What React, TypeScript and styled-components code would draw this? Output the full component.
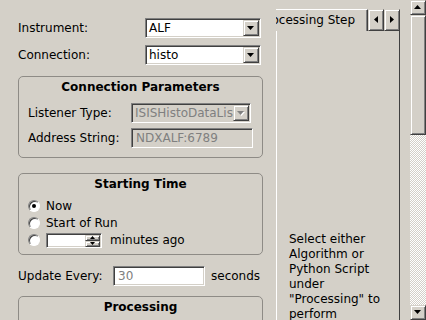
import React from 'react';
import styled, { createGlobalStyle, css } from 'styled-components';

const GlobalStyle = createGlobalStyle`
  html, body { margin: 0; padding: 0; background: #d4d0c8; }
  body {
    font-family: "DejaVu Sans", "Liberation Sans", sans-serif;
    font-size: 12px;
    color: #000;
  }
  #root { width: 426px; height: 320px; }
`;

const sunken = css`
  border: 1px solid;
  border-color: #808080 #ffffff #ffffff #808080;
  box-shadow: inset 1px 1px 0 #404040, inset -1px -1px 0 #d4d0c8;
`;

const raised = css`
  border: 1px solid;
  border-color: #d4d0c8 #404040 #404040 #d4d0c8;
  box-shadow: inset 1px 1px 0 #ffffff, inset -1px -1px 0 #808080;
`;

const Window = styled.div`
  display: flex;
  width: 426px;
  height: 320px;
  overflow: hidden;
  background: #d4d0c8;
`;

const LeftPane = styled.div`
  width: 270px;
  flex-shrink: 0;
  box-sizing: border-box;
  padding: 18px 7px 0 18px;
  display: flex;
  flex-direction: column;
  overflow: hidden;
`;

const FormRow = styled.div<{ $top?: number }>`
  display: flex;
  align-items: center;
  height: 20px;
  flex-shrink: 0;
  margin-top: ${p => p.$top ?? 0}px;
`;

const Label = styled.span<{ $width?: number; $left?: number }>`
  width: ${p => (p.$width ? `${p.$width}px` : 'auto')};
  margin-left: ${p => p.$left ?? 0}px;
  flex-shrink: 0;
  white-space: nowrap;
`;

const Combo = styled.div<{ $width: number; $disabled?: boolean }>`
  ${sunken};
  box-sizing: border-box;
  width: ${p => p.$width}px;
  height: 20px;
  padding: 1px;
  display: flex;
  align-items: center;
  background: ${p => (p.$disabled ? '#d4d0c8' : '#ffffff')};
  color: ${p => (p.$disabled ? '#808080' : '#000')};
`;

const ComboText = styled.span`
  flex: 1;
  padding-left: 2px;
  overflow: hidden;
  white-space: nowrap;
`;

const DropButton = styled.div`
  ${raised};
  box-sizing: border-box;
  width: 16px;
  height: 16px;
  flex-shrink: 0;
  display: flex;
  align-items: center;
  justify-content: center;
  background: #d4d0c8;
`;

const LineEdit = styled.div<{ $width: number; $bg?: string }>`
  ${sunken};
  box-sizing: border-box;
  width: ${p => p.$width}px;
  height: 20px;
  padding-left: 4px;
  display: flex;
  align-items: center;
  background: ${p => p.$bg ?? '#ffffff'};
  color: #808080;
  white-space: nowrap;
  overflow: hidden;
`;

const GroupBox = styled.div<{ $top: number; $bottom?: number }>`
  flex-shrink: 0;
  margin-top: ${p => p.$top}px;
  border: 1px solid #8e8b86;
  border-radius: 5px;
  padding: 3px 9px ${p => p.$bottom ?? 9}px;
  display: flex;
  flex-direction: column;
`;

const GroupTitle = styled.div`
  font-weight: bold;
  text-align: center;
  line-height: 15px;
`;

const BoxRows = styled.div<{ $top: number; $gap: number }>`
  display: flex;
  flex-direction: column;
  margin-top: ${p => p.$top}px;
  gap: ${p => p.$gap}px;
`;

const RadioRow = styled.div`
  display: flex;
  align-items: center;
  height: 16px;
  gap: 6px;
  white-space: nowrap;
`;

const Radio = styled.span<{ $checked?: boolean }>`
  position: relative;
  box-sizing: border-box;
  width: 12px;
  height: 12px;
  flex-shrink: 0;
  border-radius: 50%;
  border: 1px solid;
  border-color: #808080 #ffffff #ffffff #808080;
  box-shadow: inset 1px 1px 0 #404040;
  background: #fff;

  &::after {
    content: '';
    display: ${p => (p.$checked ? 'block' : 'none')};
    position: absolute;
    left: 3px;
    top: 3px;
    width: 4px;
    height: 4px;
    border-radius: 50%;
    background: #000;
  }
`;

const SpinBox = styled.div`
  ${sunken};
  box-sizing: border-box;
  width: 56px;
  height: 15px;
  padding: 1px;
  display: flex;
  justify-content: flex-end;
  background: #fff;
  margin-right: 2px;
`;

const SpinButtons = styled.div`
  width: 15px;
  display: flex;
  flex-direction: column;
`;

const SpinButton = styled.div`
  ${raised};
  box-sizing: border-box;
  flex: 1;
  display: flex;
  align-items: center;
  justify-content: center;
  background: #d4d0c8;
`;

const RightPane = styled.div`
  width: 124px;
  flex-shrink: 0;
  margin: 9px 0 0 6px;
  display: flex;
  flex-direction: column;
`;

const TabBar = styled.div`
  display: flex;
  height: 22px;
  flex-shrink: 0;
`;

const TabClip = styled.div`
  flex: 1;
  overflow: hidden;
  display: flex;
  justify-content: flex-end;
`;

const Tab = styled.div`
  flex-shrink: 0;
  border-top: 1px solid #fff;
  border-right: 1px solid #404040;
  box-shadow: inset -1px 0 0 #808080;
  padding: 0 12px 0 12px;
  line-height: 21px;
  white-space: nowrap;
`;

const TabScroll = styled.div`
  ${raised};
  box-sizing: border-box;
  width: 16px;
  height: 22px;
  display: flex;
  align-items: center;
  justify-content: center;
  background: #d4d0c8;
`;

const TabPage = styled.div`
  flex: 1;
  border-left: 1px solid #fff;
  border-right: 1px solid #404040;
  padding: 201px 0 0 12px;
  line-height: 15px;
  white-space: nowrap;
`;

const Spacer = styled.div`
  width: 10px;
  flex-shrink: 0;
`;

const ScrollBar = styled.div`
  width: 16px;
  height: 320px;
  flex-shrink: 0;
  display: flex;
  flex-direction: column;
`;

const ScrollArrow = styled.div`
  ${raised};
  box-sizing: border-box;
  height: 15px;
  flex-shrink: 0;
  display: flex;
  align-items: center;
  justify-content: center;
  background: #d4d0c8;
`;

const Thumb = styled.div`
  ${raised};
  box-sizing: border-box;
  height: 120px;
  flex-shrink: 0;
  background: #d4d0c8;
`;

const Trough = styled.div`
  flex: 1;
  background: repeating-conic-gradient(#ffffff 0 25%, #d4d0c8 0 50%) 0 0 / 2px 2px;
`;

type Dir = 'up' | 'down' | 'left' | 'right';

function Arrow({ dir, size = 7, color = '#000', shadow }: { dir: Dir; size?: number; color?: string; shadow?: boolean }) {
  const h = Math.ceil(size / 2);
  const vertical = dir === 'up' || dir === 'down';
  const w = vertical ? size : h;
  const ht = vertical ? h : size;
  const pts: Record<Dir, string> = {
    down: `0,0 ${size},0 ${size / 2},${h}`,
    up: `0,${h} ${size},${h} ${size / 2},0`,
    left: `${h},0 ${h},${size} 0,${size / 2}`,
    right: `0,0 0,${size} ${h},${size / 2}`,
  };
  return (
    <svg width={w + 1} height={ht + 1} viewBox={`0 0 ${w + 1} ${ht + 1}`}>
      {shadow && <polygon points={pts[dir]} fill="#fff" transform="translate(1,1)" />}
      <polygon points={pts[dir]} fill={color} />
    </svg>
  );
}

function ComboBox({ value, width, disabled }: { value: string; width: number; disabled?: boolean }) {
  return (
    <Combo $width={width} $disabled={disabled}>
      <ComboText>{value}</ComboText>
      <DropButton>
        <Arrow dir="down" color={disabled ? '#808080' : '#000'} shadow={disabled} />
      </DropButton>
    </Combo>
  );
}

export default function App() {
  return (
    <>
      <GlobalStyle />
      <Window>
        <LeftPane>
          <FormRow>
            <Label $width={127}>Instrument:</Label>
            <ComboBox value="ALF" width={116} />
          </FormRow>
          <FormRow $top={7}>
            <Label $width={127}>Connection:</Label>
            <ComboBox value="histo" width={116} />
          </FormRow>

          <GroupBox $top={11}>
            <GroupTitle>Connection Parameters</GroupTitle>
            <BoxRows $top={8} $gap={5}>
              <FormRow>
                <Label $width={103}>Listener Type:</Label>
                <ComboBox value="ISISHistoDataListener" width={120} disabled />
              </FormRow>
              <FormRow>
                <Label $width={103}>Address String:</Label>
                <LineEdit $width={122} $bg="#d4d0c8">NDXALF:6789</LineEdit>
              </FormRow>
            </BoxRows>
          </GroupBox>

          <GroupBox $top={15} $bottom={6}>
            <GroupTitle>Starting Time</GroupTitle>
            <BoxRows $top={6} $gap={1}>
              <RadioRow>
                <Radio $checked />
                Now
              </RadioRow>
              <RadioRow>
                <Radio />
                Start of Run
              </RadioRow>
              <RadioRow>
                <Radio />
                <SpinBox>
                  <SpinButtons>
                    <SpinButton>
                      <Arrow dir="up" size={5} />
                    </SpinButton>
                    <SpinButton>
                      <Arrow dir="down" size={5} />
                    </SpinButton>
                  </SpinButtons>
                </SpinBox>
                minutes ago
              </RadioRow>
            </BoxRows>
          </GroupBox>

          <FormRow $top={11}>
            <Label $width={95}>Update Every:</Label>
            <LineEdit $width={92}>30</LineEdit>
            <Label $left={6}>seconds</Label>
          </FormRow>

          <GroupBox $top={10}>
            <GroupTitle>Processing</GroupTitle>
            <BoxRows $top={8} $gap={5}>
              <FormRow />
            </BoxRows>
          </GroupBox>
        </LeftPane>

        <RightPane>
          <TabBar>
            <TabClip>
              <Tab>Processing Step</Tab>
            </TabClip>
            <TabScroll>
              <Arrow dir="left" />
            </TabScroll>
            <TabScroll>
              <Arrow dir="right" />
            </TabScroll>
          </TabBar>
          <TabPage>
            Select either
            <br />
            Algorithm or
            <br />
            Python Script
            <br />
            under
            <br />
            "Processing" to
            <br />
            perform
          </TabPage>
        </RightPane>

        <Spacer />

        <ScrollBar>
          <ScrollArrow>
            <Arrow dir="up" />
          </ScrollArrow>
          <Thumb />
          <Trough />
          <ScrollArrow>
            <Arrow dir="down" />
          </ScrollArrow>
        </ScrollBar>
      </Window>
    </>
  );
}
